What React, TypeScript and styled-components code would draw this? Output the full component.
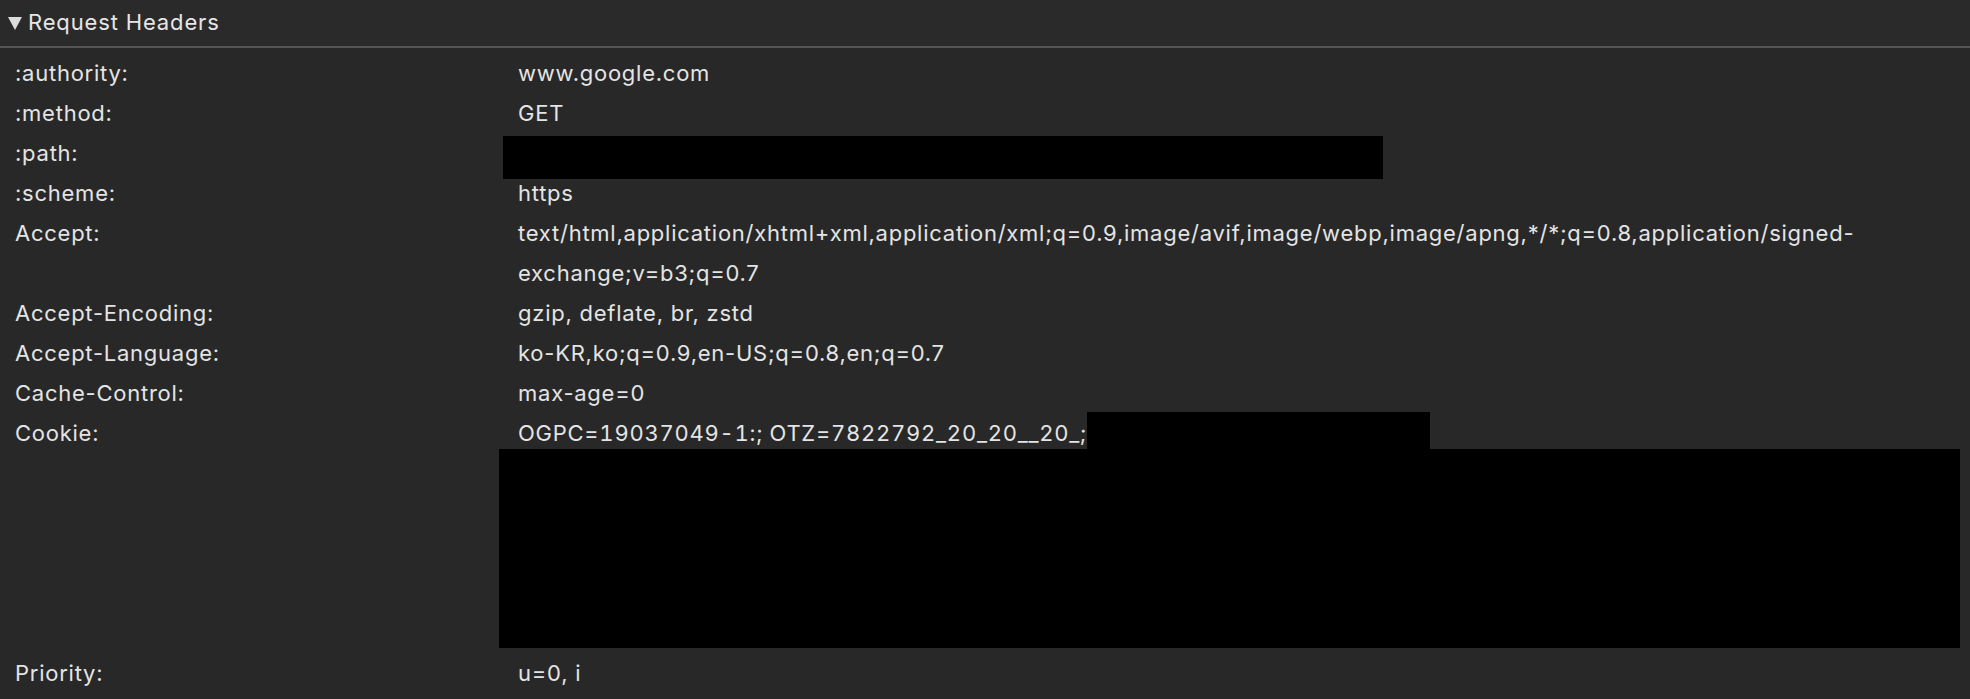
import React from "react";
import styled, { createGlobalStyle } from "styled-components";

interface HeaderEntry {
  name: string;
  value?: React.ReactNode;
  redacted?: "path" | "cookie";
}

const headers: HeaderEntry[] = [
  { name: ":authority:", value: "www.google.com" },
  { name: ":method:", value: "GET" },
  { name: ":path:", redacted: "path" },
  { name: ":scheme:", value: "https" },
  {
    name: "Accept:",
    value: (
      <>
        text/html,application/xhtml+xml,application/xml;q=0.9,image/avif,image/webp,image/apng,*/*;q=0.8,application/signed-
        <br />
        exchange;v=b3;q=0.7
      </>
    ),
  },
  { name: "Accept-Encoding:", value: "gzip, deflate, br, zstd" },
  { name: "Accept-Language:", value: "ko-KR,ko;q=0.9,en-US;q=0.8,en;q=0.7" },
  { name: "Cache-Control:", value: "max-age=0" },
  { name: "Cookie:", value: "OGPC=19037049-1:; OTZ=7822792_20_20__20_;", redacted: "cookie" },
  { name: "Priority:", value: "u=0, i" },
];

const App: React.FC = () => {
  return (
    <>
      <GlobalStyle />
      <Section>
        <SectionHeader>
          <Disclosure width="14" height="13" viewBox="0 0 14 13">
            <polygon points="0,0 14,0 7,13" fill="#dcdcdc" />
          </Disclosure>
          <Title>Request Headers</Title>
        </SectionHeader>
        <HeaderList>
          {headers.map((h) => (
            <Row key={h.name}>
              <Name>{h.name}</Name>
              <Value $tabular={h.redacted === "cookie"}>
                {h.value}
                {h.redacted === "path" && <PathRedaction />}
                {h.redacted === "cookie" && (
                  <>
                    <InlineRedaction />
                    <RedactedLines />
                  </>
                )}
              </Value>
            </Row>
          ))}
        </HeaderList>
      </Section>
    </>
  );
};

const GlobalStyle = createGlobalStyle`
  html, body {
    margin: 0;
    background: #282828;
  }
  body {
    font-family: Inter, "Liberation Sans", sans-serif;
    color: #e4e4e4;
  }
`;

const Section = styled.section`
  width: 1970px;
  height: 699px;
  overflow: hidden;
  background: #282828;
`;

const SectionHeader = styled.div`
  display: flex;
  align-items: center;
  gap: 6px;
  height: 46px;
  padding-left: 8px;
  background: #2a2a2b;
  border-bottom: 2px solid #555555;
`;

const Disclosure = styled.svg`
  display: block;
  margin-top: 1px;
`;

const Title = styled.span`
  font-size: 22px;
  letter-spacing: 0.85px;
  color: #e6e6e6;
  margin-top: -2px;
`;

const HeaderList = styled.div`
  padding-top: 5px;
`;

const Row = styled.div`
  display: grid;
  grid-template-columns: 503px 1fr;
  font-size: 22px;
  line-height: 40px;
  letter-spacing: 0.75px;
`;

const Name = styled.div`
  padding-left: 15px;
  white-space: nowrap;
`;

const Value = styled.div<{ $tabular?: boolean }>`
  position: relative;
  padding-left: 15px;
  min-height: 40px;
  font-variant-numeric: ${(p) => (p.$tabular ? "tabular-nums" : "normal")};
`;

const PathRedaction = styled.div`
  position: absolute;
  top: 3px;
  left: 0;
  width: 880px;
  height: 43px;
  background: #000;
`;

const InlineRedaction = styled.span`
  display: inline-block;
  vertical-align: top;
  position: relative;
  top: -1px;
  width: 343px;
  height: 37px;
  background: #000;
`;

const RedactedLines = styled.div`
  position: relative;
  height: 200px;

  &::before {
    content: "";
    position: absolute;
    top: -4px;
    left: -19px;
    width: 1461px;
    height: 199px;
    background: #000;
  }
`;

export default App;
